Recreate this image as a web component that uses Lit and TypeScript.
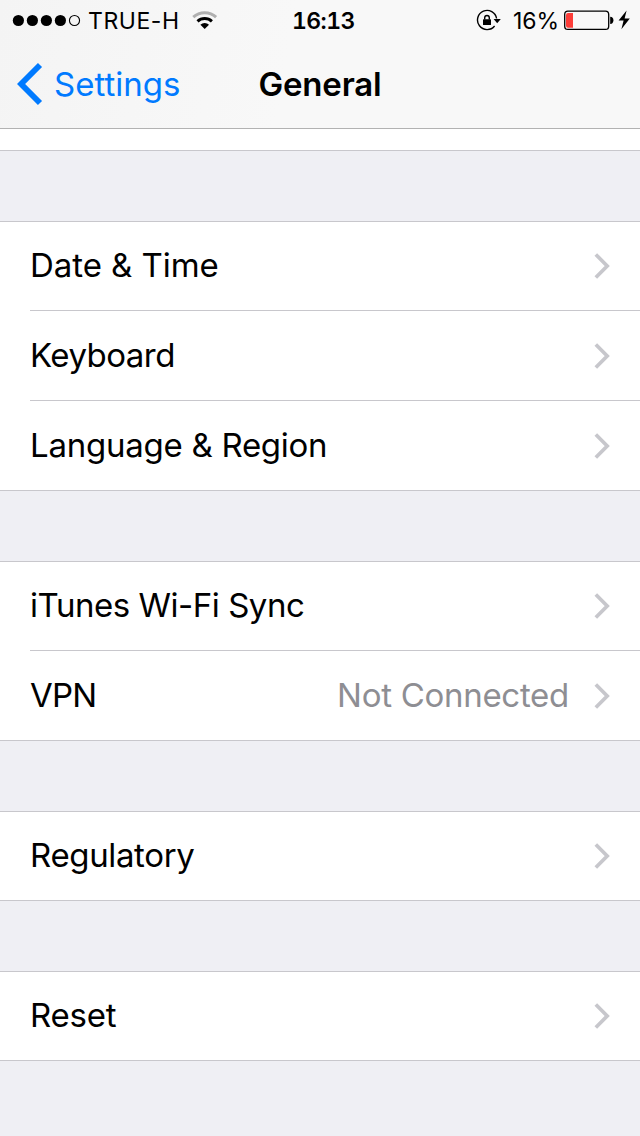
import { LitElement, html, css, svg, nothing } from "lit";
import { customElement, property } from "lit/decorators.js";
import { styleMap } from "lit/directives/style-map.js";

interface Item {
  label: string;
  tracking: number;
  value?: string;
}

const GROUPS: Item[][] = [
  [
    { label: "Date & Time", tracking: -0.05 },
    { label: "Keyboard", tracking: -0.53 },
    { label: "Language & Region", tracking: -0.26 },
  ],
  [
    { label: "iTunes Wi-Fi Sync", tracking: -0.47 },
    { label: "VPN", tracking: -0.8, value: "Not Connected" },
  ],
  [{ label: "Regulatory", tracking: -0.36 }],
  [{ label: "Reset", tracking: -0.25 }],
];

@customElement("status-bar")
export class StatusBar extends LitElement {
  static styles = css`
    :host {
      display: grid;
      grid-template-columns: 292px 1fr auto;
      height: 42px;
      font-size: 23px;
      line-height: 28px;
      color: #000;
    }
    .side {
      display: flex;
      align-items: center;
      white-space: nowrap;
    }
    .left {
      padding-left: 12px;
    }
    .carrier {
      margin-left: 7px;
      width: 102px;
      letter-spacing: 0.55px;
    }
    .time {
      font-weight: 600;
      font-feature-settings: "tnum";
      letter-spacing: -0.6px;
    }
    .right {
      padding-right: 8px;
    }
    .percent {
      margin-left: 11px;
      width: 51px;
      letter-spacing: 0;
    }
    svg {
      display: block;
      flex: none;
    }
  `;

  render() {
    return html`
      <div class="side left">
        <svg width="69" height="42" viewBox="12 0 69 42">
          ${[18.4, 32.4, 46.4, 60.4].map((x) => svg`<circle cx=${x} cy="20.5" r="5.6" />`)}
          <circle cx="74.5" cy="20.5" r="5.05" fill="none" stroke="#000" stroke-width="1.1" />
        </svg>
        <span class="carrier">TRUE-H</span>
        <svg width="28" height="42" viewBox="190 0 28 42" fill="none" stroke-width="3">
          <path d="M193.3 17.2a16.700 16.700 0 0 1 22.800 0" stroke="#b0b0b0" />
          <path d="M197.500 21.400a10.700 10.700 0 0 1 14.400 0" stroke="#000" />
          <path d="M204.700 29l-4.300-4.200a6 6 0 0 1 8.600 0z" fill="#000" />
        </svg>
      </div>
      <div class="side time">16:13</div>
      <div class="side right">
        <svg width="26" height="42" viewBox="476 0 26 42">
          <path d="M496.600 18.500A9.600 9.600 0 1 0 494.600 26" fill="none" stroke="#000" stroke-width="1.400" />
          <path d="M493.600 18.900h7.200l-3.600 4.300z" />
          <rect x="483" y="19.200" width="8" height="5.800" rx=".6" />
          <path d="M484.700 19.500v-1.700a2.300 2.300 0 0 1 4.600 0v1.700" fill="none" stroke="#000" stroke-width="1.400" />
        </svg>
        <span class="percent">16%</span>
        <svg width="68" height="42" viewBox="564 0 68 42">
          <rect x="564.700" y="11.200" width="44" height="18.200" rx="3.200" fill="none" stroke="#000" stroke-width="1.300" />
          <path d="M568 13h5v14.800h-5a2 2 0 0 1-2-2v-10.800a2 2 0 0 1 2-2z" fill="#fc3d39" />
          <path d="M610.200 16.700a3.200 3.600 0 0 1 0 7.200z" />
          <path d="M626.600 10.400l-8 10.200h5l-2.200 8.600 8.400-10.600h-5.200z" />
        </svg>
      </div>
    `;
  }
}

@customElement("nav-bar")
export class NavBar extends LitElement {
  static styles = css`
    :host {
      display: grid;
      grid-template-columns: 1fr auto 1fr;
      align-items: center;
      height: 84px;
      padding-bottom: 2px;
      font-size: 33px;
      line-height: 40px;
      white-space: nowrap;
    }
    .back {
      display: flex;
      align-items: center;
      gap: 11px;
      padding-left: 17px;
      color: #007aff;
      letter-spacing: 0;
    }
    .title {
      font-weight: 600;
      letter-spacing: -0.196px;
      color: #000;
    }
  `;

  render() {
    return html`
      <div class="back">
        <svg width="26" height="44" viewBox="0 0 26 44" fill="none" stroke="currentColor" stroke-width="5.800">
          <path d="M23 3L4.100 22 23 41" />
        </svg>
        <span>Settings</span>
      </div>
      <div class="title">General</div>
    `;
  }
}

@customElement("settings-group")
export class SettingsGroup extends LitElement {
  static styles = css`
    :host {
      display: block;
      background: #fff;
      border-top: 1px solid #c8c7cc;
      border-bottom: 1px solid #c8c7cc;
    }
    .row {
      display: flex;
      align-items: flex-end;
      box-sizing: border-box;
      height: 88px;
      margin-left: 30px;
      padding: 0 30px 25px 0;
      white-space: nowrap;
    }
    .row + .row {
      border-top: 1px solid #c8c7cc;
      height: 90px;
    }
    .label {
      flex: 1;
      color: #000;
    }
    .value {
      margin-right: 25px;
      color: #8e8e93;
      letter-spacing: -0.285px;
    }
    svg {
      display: block;
      margin-bottom: 5px;
    }
  `;

  @property({ attribute: false }) items: Item[] = [];

  render() {
    return this.items.map(
      (item) => html`
        <div class="row">
          <span class="label" style=${styleMap({ letterSpacing: `${item.tracking}px` })}>${item.label}</span>
          ${item.value ? html`<span class="value">${item.value}</span>` : nothing}
          <svg width="16" height="28" viewBox="0 0 16 28" fill="none" stroke="#c7c7cc" stroke-width="3.700">
            <path d="M1.800 2.500L13.200 14 1.800 25.500" />
          </svg>
        </div>
      `
    );
  }
}

@customElement("app-root")
export class AppRoot extends LitElement {
  static styles = css`
    :host {
      display: block;
      height: 1136px;
      overflow: hidden;
      background: #efeff4;
      font-family: Inter, sans-serif;
      font-size: 33px;
      line-height: 40px;
    }
    .header {
      background: linear-gradient(100deg, #f4f4f4, #f8f8f8 45%);
      border-bottom: 1px solid #b2b2b2;
    }
    .previous {
      height: 21px;
      background: #fff;
      border-bottom: 1px solid #c8c7cc;
    }
    .groups {
      display: flex;
      flex-direction: column;
      gap: 70px;
      padding-top: 70px;
    }
  `;

  render() {
    return html`
      <div class="header">
        <status-bar></status-bar>
        <nav-bar></nav-bar>
      </div>
      <div class="previous"></div>
      <div class="groups">
        ${GROUPS.map((items) => html`<settings-group .items=${items}></settings-group>`)}
      </div>
    `;
  }
}
